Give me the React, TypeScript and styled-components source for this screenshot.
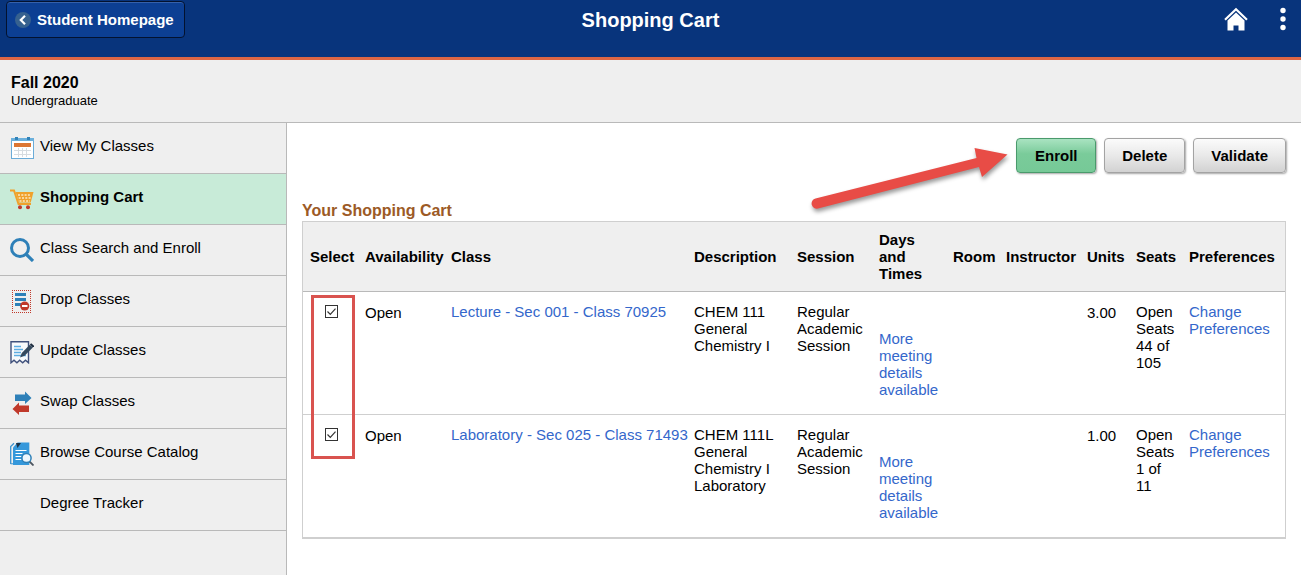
import React from 'react';
import styled, { createGlobalStyle, css } from 'styled-components';

const GlobalStyle = createGlobalStyle`
  *, *::before, *::after { box-sizing: border-box; }
  body {
    margin: 0;
    background: #fff;
    color: #000;
    font-family: "Liberation Sans", Arial, sans-serif;
    font-size: 15px;
    line-height: 17px;
  }
  button, input { font: inherit; }
`;

const Page = styled.div`
  display: flex;
  flex-direction: column;
  min-height: 100vh;
`;

const Banner = styled.header`
  display: grid;
  grid-template-columns: 1fr auto 1fr;
  align-items: start;
  height: 60px;
  padding: 1px 6px 0;
  background: #08347c;
  border-bottom: 3px solid #dd6644;
`;

const BackButton = styled.button`
  display: flex;
  align-items: center;
  justify-self: start;
  gap: 6px;
  height: 37px;
  padding: 0 10px 0 8px;
  border: 1px solid #03122f;
  border-radius: 4px;
  background: #0c3f93;
  box-shadow: inset 0 1px 0 #3561ab;
  color: #fff;
  font-weight: bold;
  cursor: pointer;
`;

const BannerTitle = styled.h1`
  margin: 0;
  color: #fff;
  font-size: 20px;
  line-height: 38px;
`;

const BannerTools = styled.div`
  display: flex;
  align-items: center;
  justify-self: end;
  gap: 29px;
  height: 36px;
  padding-right: 6px;
`;

const IconButton = styled.button`
  display: flex;
  padding: 0;
  border: 0;
  background: none;
  cursor: pointer;
`;

const TermBar = styled.section`
  height: 63px;
  padding: 14px 11px 0;
  background: #efefef;
  border-bottom: 1px solid #b9b9b9;
`;

const Term = styled.h2`
  margin: 0;
  font-size: 16px;
  line-height: 18px;
`;

const Career = styled.p`
  margin: 0;
  font-size: 13px;
  line-height: 17px;
`;

const Body = styled.div`
  display: flex;
  flex: 1;
`;

const Sidebar = styled.nav`
  flex: 0 0 287px;
  background: #efefef;
  border-right: 1px solid #b9b9b9;
`;

const NavLink = styled.a<{ $active?: boolean }>`
  display: flex;
  align-items: center;
  gap: 6px;
  height: 51px;
  padding: 0 10px;
  border-bottom: 1px solid #b9b9b9;
  color: #000;
  text-decoration: none;
  ${(p) => p.$active && css`
    background: #c8ebd8;
    font-weight: bold;
  `}
`;

const NavIcon = styled.svg`
  flex: none;
  width: 24px;
  height: 24px;
`;

const NavLabel = styled.span`
  padding-bottom: 6px;
`;

const Main = styled.main`
  flex: 1;
  min-width: 0;
  padding: 15px;
`;

const Actions = styled.div`
  position: relative;
  display: flex;
  justify-content: flex-end;
  gap: 8px;
`;

const ActionButton = styled.button<{ $primary?: boolean }>`
  min-width: 80px;
  height: 35px;
  padding: 0 17px 1px;
  border: 1px solid ${(p) => (p.$primary ? '#4a9a6c' : '#a3a3a3')};
  border-radius: 4px;
  background: ${(p) =>
    p.$primary
      ? 'linear-gradient(#a9e3c1, #7acb9a 45%, #76c997)'
      : 'linear-gradient(#fbfbfb, #e9e9e9 50%, #d2d2d2)'};
  box-shadow: 1px 1px 2px rgba(0, 0, 0, 0.35);
  color: #000;
  font-weight: bold;
  cursor: pointer;
`;

const Arrow = styled.svg`
  position: absolute;
  top: 2px;
  right: 272px;
  width: 208px;
  height: 80px;
  pointer-events: none;
`;

const CartTitle = styled.h2`
  margin: 28px 0 1px;
  color: #9c5a26;
  font-size: 16px;
  line-height: 19px;
`;

const TableFrame = styled.div`
  position: relative;
  border: 1px solid #cfcfcf;
  border-bottom: 2px solid #cfcfcf;
`;

const CartTable = styled.table`
  width: 100%;
  table-layout: fixed;
  border-collapse: collapse;
`;

const Column = styled.col<{ $width?: number }>`
  width: ${(p) => (p.$width ? `${p.$width}px` : 'auto')};
`;

const HeadCell = styled.th`
  height: 69px;
  padding: 0 0 0 8px;
  background: #efefef;
  border-bottom: 1px solid #b9b9b9;
  text-align: left;
  vertical-align: middle;
  &:first-child { padding-left: 7px; }
`;

const Row = styled.tr`
  & + & > td { border-top: 1px solid #cfcfcf; }
`;

const cellPadding = {
  text: '11px 2px 0 8px',
  value: '12px 2px 0 8px',
  meeting: '38px 2px 16px 8px',
  check: '13px 0 0 22px',
};

const Cell = styled.td<{ $kind?: keyof typeof cellPadding }>`
  padding: ${(p) => cellPadding[p.$kind ?? 'text']};
  vertical-align: top;
`;

const Link = styled.a<{ $nowrap?: boolean }>`
  color: #3467cb;
  text-decoration: none;
  white-space: ${(p) => (p.$nowrap ? 'nowrap' : 'normal')};
`;

const CheckLabel = styled.label`
  display: grid;
  width: 13px;
  height: 13px;
  > * { grid-area: 1 / 1; }
  > svg { pointer-events: none; z-index: 1; }
  > input:not(:checked) + svg { visibility: hidden; }
`;

const CheckBox = styled.input`
  appearance: none;
  width: 13px;
  height: 13px;
  margin: 0;
  border: 1px solid #333;
  background: #fff;
`;

const Highlight = styled.div`
  position: absolute;
  top: 73px;
  left: 8px;
  width: 44px;
  height: 164px;
  border: 3px solid #d9534f;
  pointer-events: none;
`;

const CalendarIcon = () => (
  <NavIcon viewBox="0 0 24 24" aria-hidden="true">
    <rect x="1.5" y="2.5" width="22" height="20" fill="#fff" stroke="#6bacd8" />
    <path d="M1 2h23v3H1z" fill="#6bb0dc" />
    <path d="M5 1h3v3H5zM17 1h3v3h-3z" fill="#3182b8" />
    <path d="M4 7h17v4H4z" fill="#dc7633" />
    <path d="M4 14.500h17M4 18.500h17M8.500 12v9M12.500 12v9M16.500 12v9" stroke="#d7dce0" fill="none" />
  </NavIcon>
);

const CartIcon = () => (
  <NavIcon viewBox="0 0 24 24" aria-hidden="true">
    <path d="M0 3.500h4L8.500 17H21" fill="none" stroke="#f0a12b" strokeWidth="2" />
    <path d="M5.500 5h18l-2.800 10.500H9z" fill="#f0a12b" />
    <path d="M8 8h13M8.700 11h12M9.500 14h10.500" stroke="#fbe9c4" strokeWidth="1.600" strokeDasharray="2 1.300" fill="none" />
    <circle cx="10" cy="20.300" r="2" fill="#c0392b" />
    <circle cx="18" cy="20.300" r="2" fill="#c0392b" />
  </NavIcon>
);

const SearchIcon = () => (
  <NavIcon viewBox="0 0 24 24" aria-hidden="true">
    <circle cx="10" cy="10" r="8.500" fill="none" stroke="#2e80b8" strokeWidth="3" />
    <path d="M16 16l7 7" stroke="#2e80b8" strokeWidth="3.200" />
  </NavIcon>
);

const DropIcon = () => (
  <NavIcon viewBox="0 0 24 24" aria-hidden="true">
    <path d="M2 1.500h19M2 23.500h19M2.500 1v23M20.500 1v23" fill="none" stroke="#c0392b" strokeDasharray="1 1" />
    <path d="M5 4h11v3H5zM5 9h11v3H5zM5 14h8v3H5z" fill="#2e80b8" />
    <circle cx="14.700" cy="17" r="4.600" fill="#c0392b" />
    <path d="M12 16h5.500v2H12z" fill="#fff" />
  </NavIcon>
);

const UpdateIcon = () => (
  <NavIcon viewBox="0 0 24 24" aria-hidden="true">
    <path d="M1 22.800V1.800h17.500v21l-3-2.600-2.800 2.600-3-2.600-2.800 2.600-2.900-2.600z" fill="#f8fafc" stroke="#40517c" strokeWidth="1.400" />
    <path d="M4 6.500h7M4 9.500h9M4 12.500h7M4 15.500h12" stroke="#5dade2" strokeWidth="1.500" />
    <path d="M10 17.500l1.800-4.500 8-8.300 3 2.700-8.200 8.400z" fill="#34495e" />
    <path d="M19.800 4.500l1.400-1.200 3 2.700-1.400 1.400z" fill="#1f2e40" />
  </NavIcon>
);

const SwapIcon = () => (
  <NavIcon viewBox="0 0 24 24" aria-hidden="true">
    <path d="M5 3.500h10V.5L21.500 7 15 13v-3H5z" fill="#2e80b8" />
    <path d="M19 14.500H9v-3L2.500 18 9 24v-3h10z" fill="#c0392b" />
  </NavIcon>
);

const CatalogIcon = () => (
  <NavIcon viewBox="0 0 24 24" aria-hidden="true">
    <path d="M.7 22V4.500L4 1.200" fill="none" stroke="#3b93cf" strokeWidth="1.300" />
    <path d="M.7 21.800H5" stroke="#3b93cf" />
    <path d="M3 5.500L7.500.5h11.800V23H3z" fill="#3598db" />
    <path d="M6 1h5L7.500 6z" fill="#1c3145" />
    <path d="M5.500 8.500h11M5.500 11.500h7M5.500 14.500h6M5.500 17.500h6" stroke="#fff" strokeWidth="1.200" />
    <path d="M19.500 19.500l4 4" stroke="#4d5660" strokeWidth="1.800" />
    <circle cx="16.500" cy="16" r="4.600" fill="#eef7fd" stroke="#2e80b8" strokeWidth="1.500" />
  </NavIcon>
);

const navItems = [
  { label: 'View My Classes', icon: <CalendarIcon /> },
  { label: 'Shopping Cart', icon: <CartIcon />, active: true },
  { label: 'Class Search and Enroll', icon: <SearchIcon /> },
  { label: 'Drop Classes', icon: <DropIcon /> },
  { label: 'Update Classes', icon: <UpdateIcon /> },
  { label: 'Swap Classes', icon: <SwapIcon /> },
  { label: 'Browse Course Catalog', icon: <CatalogIcon /> },
  { label: 'Degree Tracker', icon: <NavIcon aria-hidden="true" /> },
];

const columns: { name: React.ReactNode; key: string; width?: number }[] = [
  { key: 'select', name: 'Select', width: 54 },
  { key: 'availability', name: 'Availability', width: 86 },
  { key: 'class', name: 'Class' },
  { key: 'description', name: 'Description', width: 103 },
  { key: 'session', name: 'Session', width: 82 },
  { key: 'days', name: <>Days<br />and<br />Times</>, width: 74 },
  { key: 'room', name: 'Room', width: 53 },
  { key: 'instructor', name: 'Instructor', width: 81 },
  { key: 'units', name: 'Units', width: 49 },
  { key: 'seats', name: 'Seats', width: 53 },
  { key: 'preferences', name: 'Preferences', width: 104 },
];

const classes = [
  {
    name: 'Lecture - Sec 001 - Class 70925',
    description: ['CHEM 111', 'General Chemistry I'],
    units: '3.00',
    seats: 'Open Seats 44 of 105',
  },
  {
    name: 'Laboratory - Sec 025 - Class 71493',
    description: ['CHEM 111L', 'General Chemistry I Laboratory'],
    units: '1.00',
    seats: 'Open Seats 1 of 11',
  },
];

export default function App() {
  return (
    <Page>
      <GlobalStyle />
      <Banner>
        <BackButton type="button">
          <svg width="16" height="16" viewBox="0 0 16 16" aria-hidden="true">
            <circle cx="8" cy="8" r="8" fill="#36618f" />
            <path d="M10 3.800L5.800 8l4.200 4.200" fill="none" stroke="#fff" strokeWidth="2.200" />
          </svg>
          Student Homepage
        </BackButton>
        <BannerTitle>Shopping Cart</BannerTitle>
        <BannerTools>
          <IconButton type="button" aria-label="Home">
            <svg width="24" height="24" viewBox="0 0 24 24" aria-hidden="true">
              <path d="M1 12.800L12 2.300 23 12.800" fill="none" stroke="#fff" strokeWidth="2.200" />
              <path d="M12 5.500l8.500 8V23.500H14.500v-5h-5v5h-6V13.500z" fill="#fff" />
            </svg>
          </IconButton>
          <IconButton type="button" aria-label="Actions">
            <svg width="12" height="24" viewBox="0 0 12 24" aria-hidden="true">
              <circle cx="6" cy="3.500" r="2.700" fill="#fff" />
              <circle cx="6" cy="12" r="2.700" fill="#fff" />
              <circle cx="6" cy="20.500" r="2.700" fill="#fff" />
            </svg>
          </IconButton>
        </BannerTools>
      </Banner>
      <TermBar>
        <Term>Fall 2020</Term>
        <Career>Undergraduate</Career>
      </TermBar>
      <Body>
        <Sidebar>
          {navItems.map((item) => (
            <NavLink key={item.label} href="#" $active={item.active}>
              {item.icon}
              <NavLabel>{item.label}</NavLabel>
            </NavLink>
          ))}
        </Sidebar>
        <Main>
          <Actions>
            <ActionButton type="button" $primary>Enroll</ActionButton>
            <ActionButton type="button">Delete</ActionButton>
            <ActionButton type="button">Validate</ActionButton>
            <Arrow viewBox="0 0 208 80" aria-hidden="true">
              <path
                d="M9.500 58.500L170.500 18 168.500 8 201.500 14.500 176 37 173 27 12 68.500a5 5 0 0 1-2.500-10z"
                fill="#e84c46"
                style={{ filter: 'drop-shadow(1px 3px 2px rgba(0,0,0,.4))' }}
              />
            </Arrow>
          </Actions>
          <CartTitle>Your Shopping Cart</CartTitle>
          <TableFrame>
            <CartTable>
              <colgroup>
                {columns.map((c) => <Column key={c.key} $width={c.width} />)}
              </colgroup>
              <thead>
                <tr>
                  {columns.map((c) => <HeadCell key={c.key} scope="col">{c.name}</HeadCell>)}
                </tr>
              </thead>
              <tbody>
                {classes.map((c) => (
                  <Row key={c.name}>
                    <Cell $kind="check">
                      <CheckLabel>
                        <CheckBox type="checkbox" defaultChecked aria-label={`Select ${c.name}`} />
                        <svg width="13" height="13" viewBox="0 0 13 13" aria-hidden="true">
                          <path d="M2.500 6.500l2.800 2.800 5.200-5.600" fill="none" stroke="#333" strokeWidth="1.200" />
                        </svg>
                      </CheckLabel>
                    </Cell>
                    <Cell $kind="value">Open</Cell>
                    <Cell><Link href="#" $nowrap>{c.name}</Link></Cell>
                    <Cell>{c.description[0]}<br />{c.description[1]}</Cell>
                    <Cell>Regular Academic Session</Cell>
                    <Cell $kind="meeting"><Link href="#">More meeting details available</Link></Cell>
                    <Cell />
                    <Cell />
                    <Cell $kind="value">{c.units}</Cell>
                    <Cell>{c.seats}</Cell>
                    <Cell><Link href="#">Change Preferences</Link></Cell>
                  </Row>
                ))}
              </tbody>
            </CartTable>
            <Highlight />
          </TableFrame>
        </Main>
      </Body>
    </Page>
  );
}
